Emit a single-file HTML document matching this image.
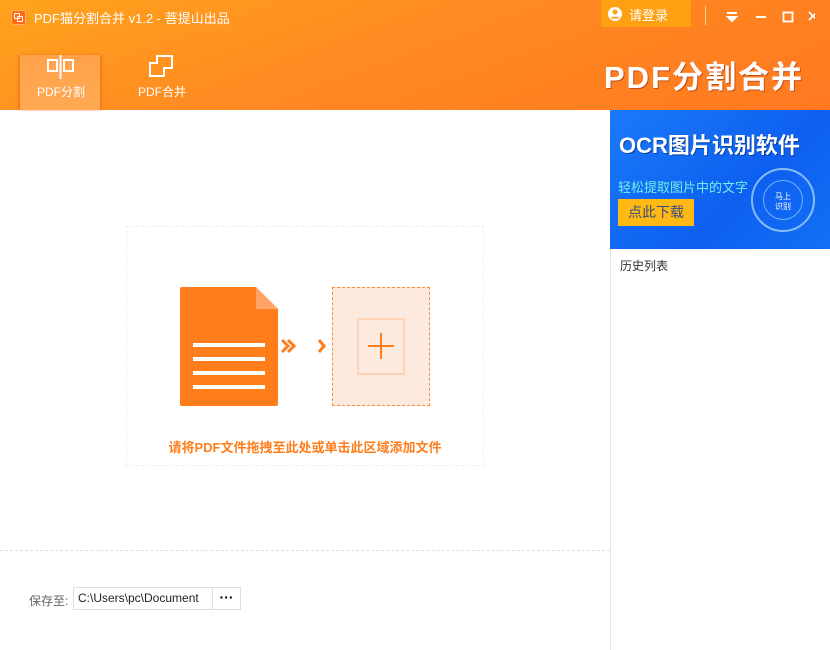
<!DOCTYPE html>
<html><head><meta charset="utf-8"><style>
*{margin:0;padding:0;box-sizing:border-box}
body{width:830px;height:650px;overflow:hidden;background:#fff;font-family:"Liberation Sans","Noto Sans CJK SC",sans-serif;position:relative}
.hdr{position:absolute;left:0;top:0;width:830px;height:110px;background:linear-gradient(160deg,#ffa31c 0%,#ff8a22 45%,#ff7820 100%)}
.abs{position:absolute}
</style></head><body>
<div class="hdr">
  <div class="abs" style="left:11px;top:10px;width:15px;height:15px;background:#ff6a12;border-radius:3px;border:1px solid #ffb060"><div class="abs" style="left:2px;top:2px;width:6px;height:6px;border:1.5px solid #fff;border-radius:1px"></div><div class="abs" style="left:5px;top:5px;width:6px;height:6px;border:1.5px solid #fff;border-radius:1px"></div></div>
  <div class="abs" style="left:34px;top:8px;color:#fff;font-size:13px">PDF猫分割合并 v1.2 - 菩提山出品</div>
  <div class="abs" style="left:601px;top:0;width:90px;height:27px;background:#ff9f12"></div>
  <svg class="abs" style="left:607px;top:6px" width="16" height="16" viewBox="0 0 16 16"><circle cx="8" cy="8" r="7" fill="#fff"/><circle cx="8" cy="6" r="2.5" fill="#ff9f12"/><path d="M3.5 12.5c1-2.5 8-2.5 9 0" fill="#ff9f12"/></svg>
  <div class="abs" style="left:629px;top:5px;color:#fff;font-size:13px">请登录</div>
  <div class="abs" style="left:705px;top:6px;width:1px;height:19px;background:#ffd0a0"></div>
  <svg class="abs" style="left:725px;top:10px" width="90" height="14"><path d="M2 3h10M3 7h8l-4 4z" stroke="#fff" stroke-width="2" fill="#fff"/><path d="M31 7h10" stroke="#fff" stroke-width="2"/><rect x="58.5" y="2.5" width="9" height="9" stroke="#fff" stroke-width="1.8" fill="none"/><path d="M84 2l8 8M92 2l-8 8" stroke="#fff" stroke-width="1.8"/></svg>
  <div class="abs" style="left:20px;top:55px;width:80px;height:55px;background:linear-gradient(#ffa24a,#ffa955);box-shadow:-2px 0 2px rgba(200,80,0,.3),2px 0 2px rgba(200,80,0,.3)"></div>
  <svg class="abs" style="left:47px;top:55px" width="28" height="24"><rect x="1" y="5" width="9" height="11" stroke="#fff" stroke-width="2" fill="none"/><rect x="17" y="5" width="9" height="11" stroke="#fff" stroke-width="2" fill="none"/><path d="M13.5 0v24" stroke="#fff" stroke-width="2"/></svg>
  <div class="abs" style="left:37px;top:83px;color:#fff;font-size:12px">PDF分割</div>
  <svg class="abs" style="left:149px;top:55px" width="26" height="22"><path d="M8 1h15v12h-8v8H1V8h7z" stroke="#fff" stroke-width="2" fill="none"/></svg>
  <div class="abs" style="left:138px;top:83px;color:#fff;font-size:12px">PDF合并</div>
  <div class="abs" style="left:604px;top:58px;color:#fff;font-size:31px;font-weight:bold;letter-spacing:2px;line-height:40px;text-shadow:1px 1px 0 #c0501a">PDF分割合并</div>
</div>
<div class="abs" style="left:610px;top:110px;width:1px;height:540px;background:#e4e4e4"></div>
<div class="abs" style="left:610px;top:110px;width:220px;height:139px;background:linear-gradient(135deg,#1a7af8,#0e5ff0 60%,#1370f5)">
  <div class="abs" style="left:9px;top:18px;color:#fff;font-size:22px;font-weight:bold;text-shadow:1px 1px 0 #0840a0">OCR图片识别软件</div>
  <div class="abs" style="left:8px;top:67px;color:#6ff0ea;font-size:13px">轻松提取图片中的文字</div>
  <div class="abs" style="left:8px;top:89px;width:76px;height:27px;background:#ffb914;color:#3a4a80;font-size:14px;line-height:27px;text-align:center">点此下载</div>
  <div class="abs" style="left:141px;top:58px;width:64px;height:64px;border:2px solid rgba(180,230,255,.7);border-radius:50%"></div>
  <div class="abs" style="left:153px;top:70px;width:40px;height:40px;border:1px solid rgba(180,230,255,.6);border-radius:50%;color:#fff;font-size:8px;text-align:center;padding-top:11px;line-height:10px">马上<br>识别</div>
</div>
<div class="abs" style="left:620px;top:257px;font-size:12px;color:#333">历史列表</div>
<div class="abs" style="left:126px;top:226px;width:358px;height:240px;border:1px dashed #eee"></div>
<div class="abs" style="left:180px;top:287px;width:98px;height:119px;background:#ff7d1a;border-radius:2px;clip-path:polygon(0 0,76px 0,98px 22px,98px 119px,0 119px)"></div>
<div class="abs" style="left:256px;top:287px;width:22px;height:22px;background:#ffa466;clip-path:polygon(0 0,100% 100%,0 100%)"></div>
<div class="abs" style="left:193px;top:343px;width:72px;height:4px;background:#fff;box-shadow:0 14px 0 #fff,0 28px 0 #fff,0 42px 0 #fff"></div>
<svg class="abs" style="left:280px;top:338px" width="50" height="16"><path d="M2 2l6 6-6 6M8 2l6 6-6 6M319 0" stroke="#ff7d1a" stroke-width="3" fill="none"/><path d="M39 2l5 6-5 6" stroke="#ff7d1a" stroke-width="3" fill="none"/></svg>
<div class="abs" style="left:332px;top:287px;width:98px;height:119px;background:#fdeadf;border:1px dashed #ff8a3a"></div>
<div class="abs" style="left:357px;top:318px;width:48px;height:57px;border:2px solid #fdd3b5"></div>
<div class="abs" style="left:368px;top:345px;width:26px;height:2px;background:#ff7d1a"></div>
<div class="abs" style="left:380px;top:333px;width:2px;height:26px;background:#ff7d1a"></div>
<div class="abs" style="left:126px;top:437px;width:358px;text-align:center;color:#ff7d1a;font-size:13px;font-weight:bold">请将PDF文件拖拽至此处或单击此区域添加文件</div>
<div class="abs" style="left:0;top:550px;width:610px;border-top:1px dashed #e0e0e0"></div>
<div class="abs" style="left:29px;top:592px;font-size:12px;color:#666">保存至:</div>
<div class="abs" style="left:73px;top:587px;width:168px;height:23px;border:1px solid #ddd;font-size:12px;color:#222;line-height:21px;padding-left:4px;white-space:nowrap;overflow:hidden">C:\Users\pc\Document</div>
<div class="abs" style="left:212px;top:587px;width:29px;height:23px;border:1px solid #ddd;background:#fff;font-size:14px;text-align:center;line-height:19px;font-weight:bold">···</div>
</body></html>
